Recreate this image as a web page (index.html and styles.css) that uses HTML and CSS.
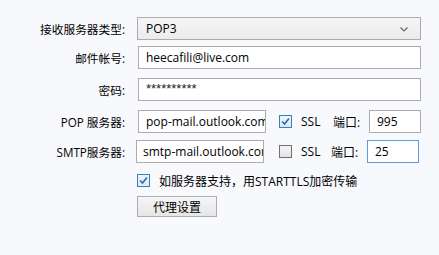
FILE: index.html
```html
<!DOCTYPE html>
<html>
<head>
<meta charset="utf-8">
<link rel="stylesheet" href="styles.css">
</head>
<body>
<div class="form">
  <div class="row r1">
    <span class="label">接收服务器类型:</span>
    <div class="select"><span>POP3</span>
      <svg class="chev" width="8" height="5" viewBox="0 0 8 5"><path d="M0.5 0.5 L4 4 L7.5 0.5" fill="none" stroke="#666" stroke-width="1.2"/></svg>
    </div>
  </div>
  <div class="row r2">
    <span class="label">邮件帐号:</span>
    <div class="input wide">heecafili@live.com</div>
  </div>
  <div class="row r3">
    <span class="label">密码:</span>
    <div class="input wide pwd"><span class="stars">**********</span></div>
  </div>
  <div class="row r4">
    <span class="label">POP 服务器:</span>
    <div class="input server">pop-mail.outlook.com</div>
    <span class="check checked g13"><svg width="11" height="11" viewBox="0 0 11 11"><path d="M2 5.5 L4.5 8 L9 2.5" fill="none" stroke="#2d6bb0" stroke-width="1.6"/></svg></span>
    <span class="ssl">SSL</span>
    <span class="port-label">端口:</span>
    <div class="input port">995</div>
  </div>
  <div class="row r5">
    <span class="label">SMTP服务器:</span>
    <div class="input server smtp">smtp-mail.outlook.com</div>
    <span class="check g15"></span>
    <span class="ssl">SSL</span>
    <span class="port-label pl2">端口:</span>
    <div class="input port focus">25</div>
  </div>
  <div class="row r6">
    <span class="label"></span>
    <span class="check checked"><svg width="11" height="11" viewBox="0 0 11 11"><path d="M2 5.5 L4.5 8 L9 2.5" fill="none" stroke="#2d6bb0" stroke-width="1.6"/></svg></span>
    <span class="tls">如服务器支持，用STARTTLS加密传输</span>
  </div>
  <div class="row r7">
    <span class="label"></span>
    <div class="button">代理设置</div>
  </div>
</div>
</body>
</html>
```

FILE: styles.css
```css
html, body {
  margin: 0;
  padding: 0;
  background: #f8f9fd;
  width: 439px;
  height: 255px;
  overflow: hidden;
}
body {
  font-family: "Open Sans", "Noto Sans CJK SC", sans-serif;
  font-size: 12px;
  color: #000;
}
.form {
  padding-top: 17px;
  display: flex;
  flex-direction: column;
}
.row {
  display: flex;
  align-items: center;
  height: 23px;
}
.r2 { margin-top: 6px; }
.r3 { margin-top: 9px; }
.r4 { margin-top: 9px; }
.r5 { margin-top: 7px; }
.r6 { margin-top: 11px; height: 13px; }
.r7 { margin-top: 9px; height: 21px; }
.label {
  width: 125px;
  text-align: right;
  margin-right: 12px;
  white-space: nowrap;
  flex-shrink: 0;
  font-size: 11.7px;
}
.select {
  box-sizing: border-box;
  width: 284px;
  height: 23px;
  border: 1px solid #acacac;
  background: linear-gradient(#f5f5f5, #ececec);
  display: flex;
  align-items: center;
  justify-content: space-between;
  padding: 0 12px 0 8px;
}
.chev { margin-top: 1px; }
.input {
  box-sizing: border-box;
  height: 23px;
  border: 1px solid #acacac;
  background: #fff;
  padding: 0 7px;
  display: flex;
  align-items: center;
  white-space: nowrap;
  overflow: hidden;
}
.wide { width: 283px; margin-left: 1px; }
.stars {
  font-family: "Liberation Sans", sans-serif;
  font-size: 13px;
  color: #222;
  margin-bottom: 3px;
}
.server { width: 128px; margin-left: 1px; }
.smtp { margin-left: -1px; padding-left: 6px; }
.port { width: 52px; }
.focus { border-color: #5b9ce6; }
.check {
  box-sizing: border-box;
  width: 13px;
  height: 13px;
  border: 1px solid #707070;
  background: linear-gradient(#f4f4f4, #e4e4e4);
  display: inline-flex;
  align-items: center;
  justify-content: center;
  flex-shrink: 0;
}
.check.checked {
  border-color: #3c7fb1;
  background: linear-gradient(#eef5fb, #dceaf7);
}
.g13 { margin-left: 13px; }
.g15 { margin-left: 15px; }
.ssl { margin-left: 9px; width: 32px; }
.port-label { width: 36px; }
.pl2 { margin-left: -2px; }
.tls { margin-left: 9px; }
.button {
  box-sizing: border-box;
  width: 80px;
  height: 21px;
  border: 1px solid #adadad;
  background: linear-gradient(#f6f6f6, #e6e6e6);
  display: flex;
  align-items: center;
  justify-content: center;
}
```
